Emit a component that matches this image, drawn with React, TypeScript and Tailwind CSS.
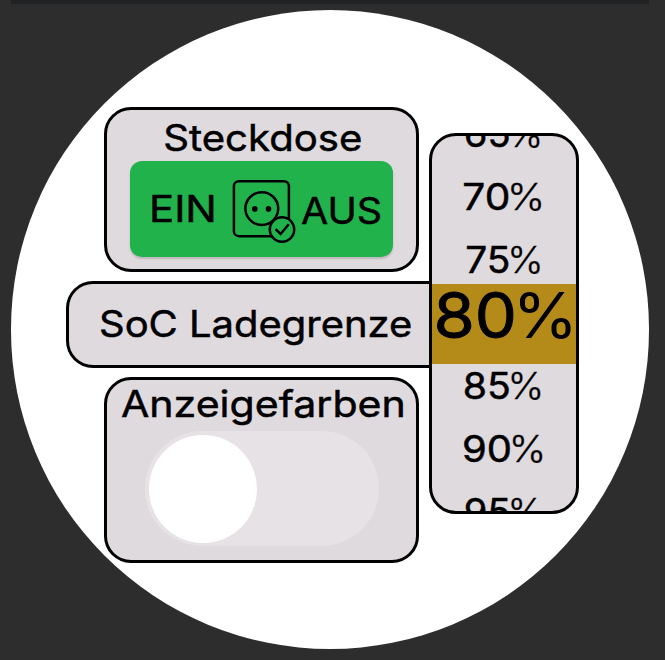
const label = "block whitespace-pre text-[37px] leading-[37px] font-normal [-webkit-text-stroke:0.5px_#000]";

function SocketIcon() {
  return (
    <svg width="64" height="66" viewBox="0 0 64 66" fill="none" stroke="#000" strokeWidth="2.5" className="shrink-0">
      <rect x="1.9" y="2.2" width="55" height="55" rx="5" />
      <circle cx="29.8" cy="29.6" r="16.4" />
      <circle cx="22.8" cy="29.9" r="2.8" fill="#000" stroke="none" />
      <circle cx="36.5" cy="29.9" r="2.8" fill="#000" stroke="none" />
      <circle cx="50" cy="50.5" r="12.2" fill="#22b24c" />
      <path d="M43.6 50.2l5 4.8 8.2-9.8" />
    </svg>
  );
}

function Option({ value, scale, className = "" }: { value: string; scale: string; className?: string }) {
  return (
    <div className={`flex h-[63px] shrink-0 items-center justify-center ${className}`}>
      <span className={`${label} ${scale}`}>
        {value}
        <span className="-ml-[3px] font-light [-webkit-text-stroke:0.3px_#000]">%</span>
      </span>
    </div>
  );
}

export default function App() {
  return (
    <div className="h-[660px] w-[665px] overflow-hidden bg-[#2d2d2d] font-['Inter',sans-serif] text-black">
      <div className="ml-[11px] h-1 w-[638px] bg-[#202224]" />
      <div className="mt-1.5 ml-[11px] flex h-[639px] w-[638px] overflow-hidden rounded-full bg-white pl-[55px]">
        <div className="flex w-[363px] shrink-0 flex-col pt-[97px]">
          <section className="ml-[38px] h-[165px] w-[315px] rounded-[27px] border-[3px] border-black bg-[#dfdade] pt-[9px]">
            <h2 className="flex justify-center">
              <span className={`${label} translate-x-px scale-x-[1.085]`}>Steckdose</span>
            </h2>
            <button className="mt-[5px] ml-[23px] flex h-24 w-[263px] items-start rounded-xl bg-[#22b24c] shadow-[0_2px_2px_#bcb8bc]">
              <span className={`${label} mt-[29px] ml-[19px] w-[63px] shrink-0 origin-left scale-x-[1.13] text-left`}>EIN</span>
              <span className="mt-[18px] ml-5">
                <SocketIcon />
              </span>
              <span className={`${label} mt-[31px] ml-[5px] origin-left scale-x-[1.065]`}>AUS</span>
            </button>
          </section>
          <section className="mt-[9px] h-[87px] w-full rounded-l-[27px] border-[3px] border-r-0 border-black bg-[#dfdade] pt-[21px] pl-[30px]">
            <span className={`${label} w-max origin-left scale-x-[1.08]`}>SoC Ladegrenze</span>
          </section>
          <section className="mt-[9px] ml-[38px] h-[186px] w-[315px] rounded-[27px] border-[3px] border-black bg-[#dfdade] pt-[5px]">
            <span className={`${label} ml-[14px] w-max origin-left scale-x-[1.11]`}>Anzeigefarben</span>
            <button className="mt-[9px] ml-[38px] flex h-[115px] w-[234px] items-center rounded-full bg-[#e6e2e6] pl-1">
              <span className="size-[108px] rounded-full bg-white" />
            </button>
          </section>
        </div>
        <div className="mt-[123px] flex h-[381px] w-[150px] shrink-0 flex-col overflow-hidden rounded-[27px] border-[3px] border-black bg-[#dfdade]">
          <Option value="65" scale="scale-x-[1.03]" className="-mt-[34px]" />
          <Option value="70" scale="scale-x-[1.1]" />
          <Option value="75" scale="scale-x-[1.05]" className="-mb-[7px]" />
          <div className="flex h-20 shrink-0 justify-center bg-[#b48a19]">
            <span className="block origin-center translate-x-[1.5px] scale-x-[1.06] text-[63px] leading-[63px] font-normal [-webkit-text-stroke:1px_#000]">
              80<span className="-ml-1 [-webkit-text-stroke:0px]">%</span>
            </span>
          </div>
          <Option value="85" scale="scale-x-[1.06]" className="-mt-[10px]" />
          <Option value="90" scale="scale-x-[1.08]" />
          <Option value="95" scale="scale-x-[1.03]" />
        </div>
      </div>
    </div>
  );
}
